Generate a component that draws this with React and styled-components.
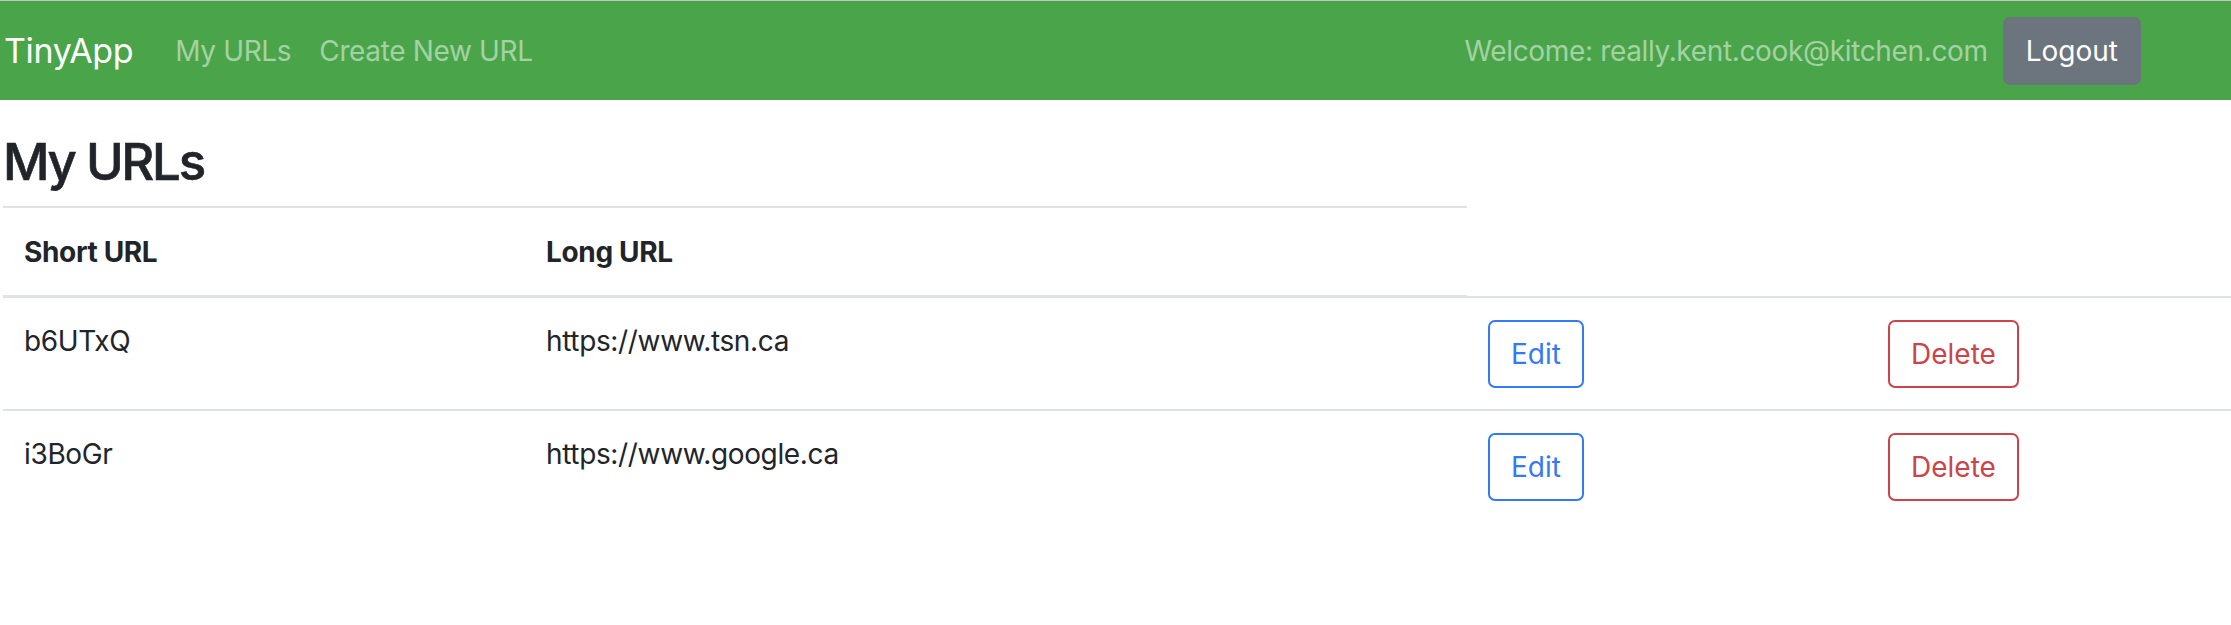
import React from 'react';
import styled, { createGlobalStyle } from 'styled-components';

const GlobalStyle = createGlobalStyle`
  body {
    margin: 0;
    background: #fff;
    color: #212529;
    font-family: Inter, "Noto Sans", sans-serif;
    font-size: 28px;
    line-height: 1.5;
    letter-spacing: -0.35px;
  }
`;

const Navbar = styled.nav`
  display: flex;
  align-items: center;
  height: 99px;
  border-top: 1px solid #c4c4c4;
  background: #4aa54a;
  padding: 0 90px 0 4px;
`;

const Brand = styled.a`
  color: #fff;
  font-size: 34px;
  line-height: 1.5;
  margin-right: 28px;
  text-decoration: none;
`;

const NavLink = styled.a`
  color: rgba(255, 255, 255, 0.5);
  padding: 0 14px;
  text-decoration: none;
`;

const Welcome = styled.span`
  margin-left: auto;
  margin-right: 15px;
  color: rgba(255, 255, 255, 0.5);
`;

const LogoutButton = styled.button`
  height: 68px;
  padding: 0 23px;
  border: none;
  border-radius: 7px;
  background: #6c757d;
  color: #fff;
  font: inherit;
  line-height: 42px;
`;

const Main = styled.main`
  padding: 31px 0 0 3px;
`;

const Title = styled.h2`
  margin: 0 0 14px;
  font-size: 51px;
  font-weight: 500;
  line-height: 1.2;
  letter-spacing: -2.3px;
  -webkit-text-stroke: 0.6px #212529;
`;

const Table = styled.table`
  width: 100%;
  border-collapse: collapse;
  table-layout: fixed;
`;

const Col = styled.col`
  width: ${p => p.$w || 'auto'};
`;

const Th = styled.th`
  text-align: left;
  font-weight: 700;
  padding: 23px 21px 22px;
  line-height: 42px;
  vertical-align: bottom;
  border-top: 2px solid #dee2e6;
  border-bottom: 3px solid #dee2e6;
`;

const Td = styled.td`
  padding: 22px 21px 21px;
  line-height: 42px;
  vertical-align: top;
  border-top: 2px solid #dee2e6;
`;

const OutlineButton = styled.button`
  height: 68px;
  padding: 0 21px;
  border: 2px solid ${p => p.$color};
  border-radius: 7px;
  background: transparent;
  color: ${p => p.$color};
  font: inherit;
  line-height: 42px;
`;

const urls = [
  { short: 'b6UTxQ', long: 'https://www.tsn.ca' },
  { short: 'i3BoGr', long: 'https://www.google.ca' },
];

export default function App() {
  return (
    <>
      <GlobalStyle />
      <Navbar>
        <Brand href="#">TinyApp</Brand>
        <NavLink href="#">My URLs</NavLink>
        <NavLink href="#">Create New URL</NavLink>
        <Welcome>Welcome: really.kent.cook@kitchen.com</Welcome>
        <LogoutButton>Logout</LogoutButton>
      </Navbar>
      <Main>
        <Title>My URLs</Title>
        <Table>
          <colgroup>
            <Col $w="522px" />
            <Col $w="942px" />
            <Col $w="400px" />
            <Col />
          </colgroup>
          <thead>
            <tr>
              <Th>Short URL</Th>
              <Th>Long URL</Th>
            </tr>
          </thead>
          <tbody>
            {urls.map(u => (
              <tr key={u.short}>
                <Td>{u.short}</Td>
                <Td>{u.long}</Td>
                <Td><OutlineButton $color="#3479f6">Edit</OutlineButton></Td>
                <Td><OutlineButton $color="#cc4449">Delete</OutlineButton></Td>
              </tr>
            ))}
          </tbody>
        </Table>
      </Main>
    </>
  );
}
